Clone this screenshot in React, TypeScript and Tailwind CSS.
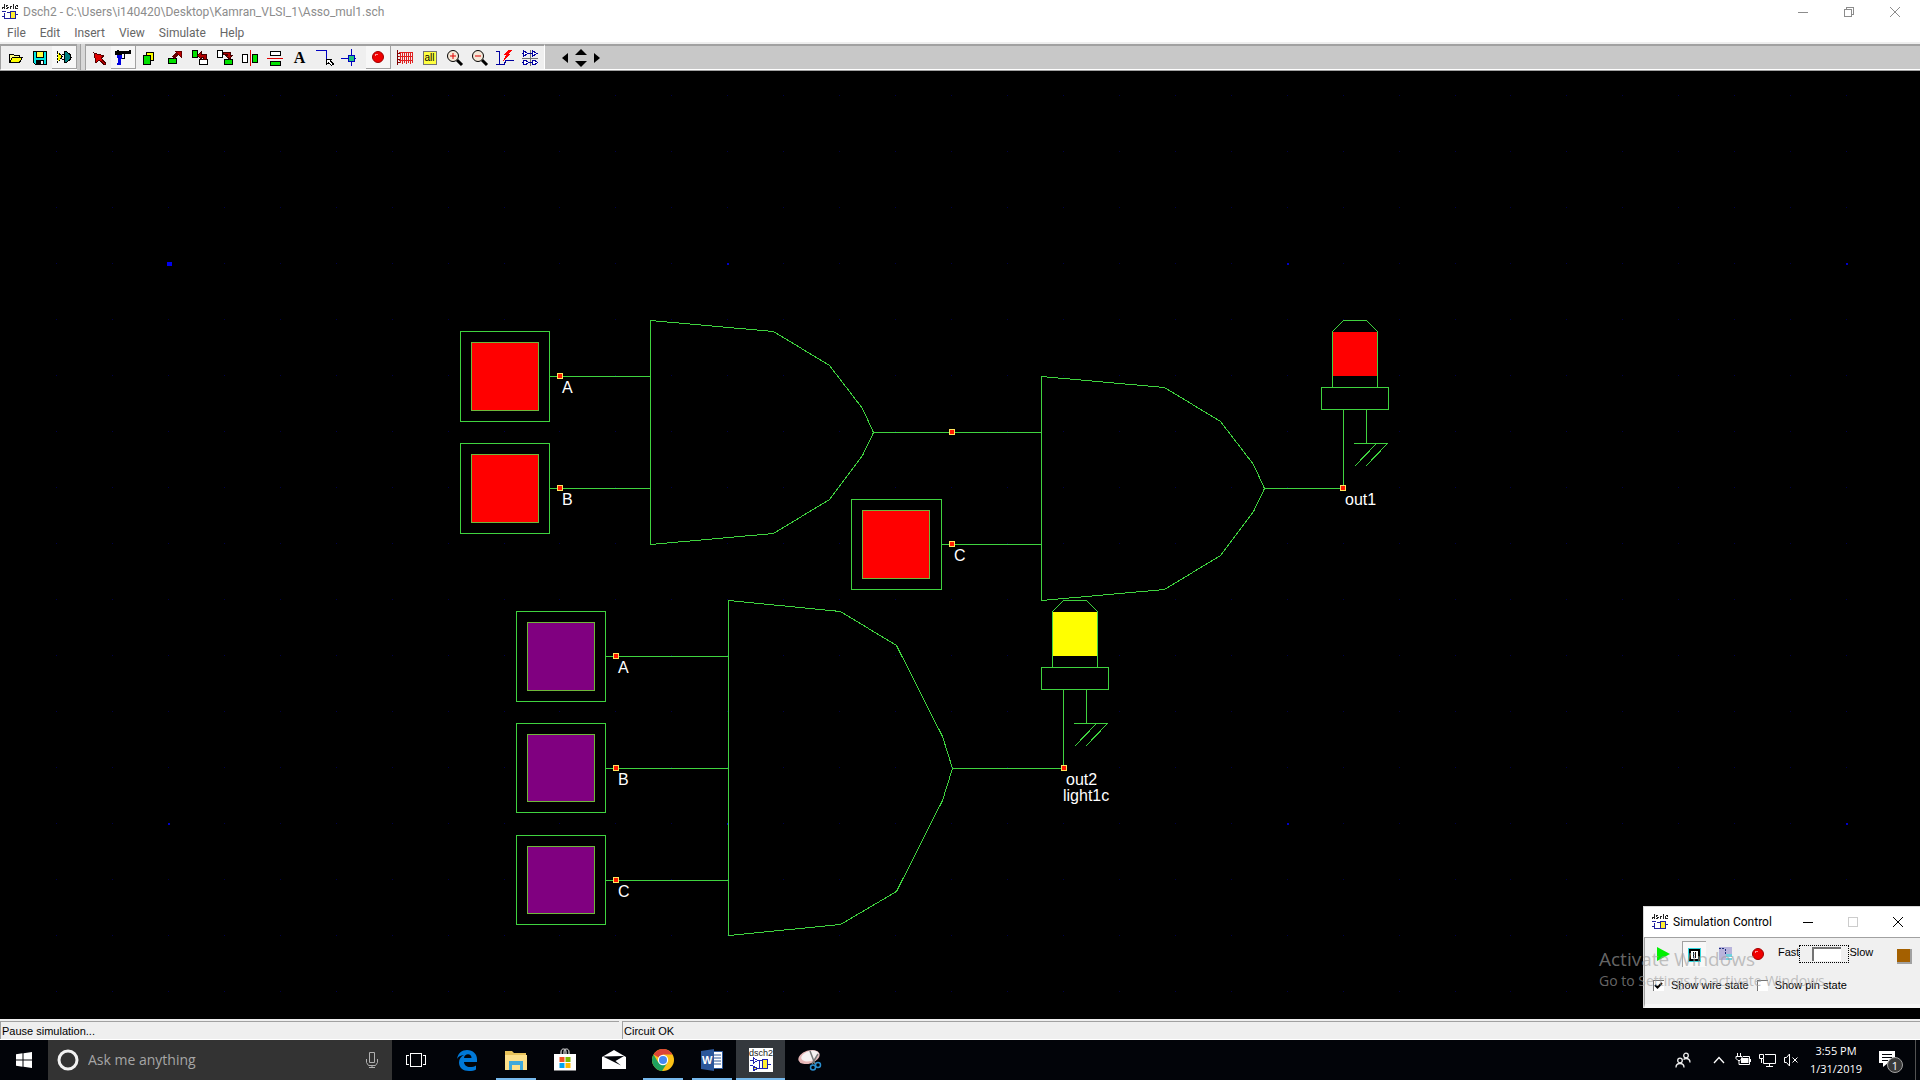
import React from "react";

const GREEN = "#3fd33f";

/* ---------- Schematic parts ---------- */

type Point = [number, number];
const pts = (list: Point[]) => list.map((p) => p.join(",")).join(" ");

function Pin({ x, y }: { x: number; y: number }) {
  return (
    <g>
      <rect x={x - 3} y={y - 3} width={6} height={6} fill="#ffe45c" />
      <rect x={x - 2} y={y - 2} width={4} height={4} fill="#ff1a00" />
    </g>
  );
}

function Label({ x, y, children }: { x: number; y: number; children: string }) {
  return (
    <text x={x} y={y} fill="#ffffff" fontSize={16}>
      {children}
    </text>
  );
}

type SwitchProps = { x: number; y: number; w?: number; h?: number; color: string; name: string };

function Switch({ x, y, w = 89, h = 90, color, name }: SwitchProps) {
  return (
    <g>
      <rect x={x + 0.5} y={y + 0.5} width={w} height={h} fill="none" stroke={GREEN} />
      <rect x={x + 11.5} y={y + 11.5} width={67} height={h - 22} fill={color} stroke="#6fb83a" />
      <path d={`M${x + w} ${y + 45.5}h10`} stroke={GREEN} />
      <Pin x={x + w + 11} y={y + 45} />
      <Label x={x + w + 13} y={y + 62}>
        {name}
      </Label>
    </g>
  );
}

function Lamp({ x, y, color }: { x: number; y: number; color: string }) {
  return (
    <g transform={`translate(${x} ${y})`} fill="none" stroke={GREEN}>
      <path d="M11.5 67.5V11.5L22.5 0.5H45.5L56.5 11.5V67.5" />
      <rect x={12} y={12} width={44} height={44} fill={color} stroke="none" />
      <rect x={0.5} y={67.5} width={67} height={22} fill="#000" />
      <path d="M22.5 90V168M45.5 90V123M33 123.5H67M55.5 123.5L33.5 146.5M66.5 123.5L44.5 146.5" />
    </g>
  );
}

const and2: Point[] = [
  [0, 0], [123, 11], [179, 45], [212, 88], [223, 112],
  [212, 135], [179, 179], [123, 213], [0, 224],
];
const and3: Point[] = [
  [0, 0], [112, 11], [168, 45], [214, 136], [224, 168],
  [214, 200], [168, 291], [112, 324], [0, 335],
];

function Gate({ x, y, shape }: { x: number; y: number; shape: Point[] }) {
  return (
    <polygon
      points={pts(shape)}
      transform={`translate(${x + 0.5} ${y + 0.5})`}
      fill="none"
      stroke={GREEN}
    />
  );
}

function Grid() {
  const dots: React.ReactNode[] = [];
  for (let r = 0; r < 17; r++) {
    for (let c = 0; c < 33; c++) {
      const x = Math.round(56 + c * 55.94);
      const y = Math.round(27 + r * 56);
      const major = (c - 2) % 10 === 0 && (r === 3 || r === 13);
      if (major && r === 3 && c === 2) {
        dots.push(<rect key={`${r}-${c}`} x={x - 1} y={y - 4} width={5} height={4} fill="#0000f0" />);
      } else {
        dots.push(
          <rect
            key={`${r}-${c}`}
            x={x}
            y={y - 3}
            width={major ? 2 : 1}
            height={major ? 2 : 1}
            fill={major ? "#0000c8" : "#00004a"}
          />,
        );
      }
    }
  }
  return <g>{dots}</g>;
}

function Schematic() {
  return (
    <svg
      className="block h-full w-full font-['Liberation_Sans',Arial,sans-serif]"
      shapeRendering="crispEdges"
      role="img"
      aria-label="Circuit schematic"
    >
      <Grid />
      <g transform="translate(0 -71)">
        <path
          d="M560 376.5H651M560 488.5H651M873 432.5H1042M952 544.5H1042M1265 488.5H1343M616 656.5H729M616 768.5H729M616 880.5H729M952 768.5H1064"
          stroke={GREEN}
        />
        <Gate x={650} y={320} shape={and2} />
        <Gate x={1041} y={376} shape={and2} />
        <Gate x={728} y={600} shape={and3} />
        <Switch x={460} y={331} color="#ff0000" name="A" />
        <Switch x={460} y={443} color="#ff0000" name="B" />
        <Switch x={851} y={499} w={90} color="#ff0000" name="C" />
        <Switch x={516} y={611} color="#800080" name="A" />
        <Switch x={516} y={723} h={89} color="#800080" name="B" />
        <Switch x={516} y={835} h={89} color="#800080" name="C" />
        <Lamp x={1321} y={320} color="#ff0000" />
        <Lamp x={1041} y={600} color="#ffff00" />
        <Pin x={952} y={432} />
        <Pin x={1343} y={488} />
        <Pin x={1064} y={768} />
        <Label x={1345} y={505}>out1</Label>
        <Label x={1066} y={785}>out2</Label>
        <Label x={1063} y={801}>light1c</Label>
      </g>
    </svg>
  );
}

/* ---------- Toolbar glyphs, drawn on a 24 x 24 grid ---------- */

const glyphs: Record<string, React.ReactNode> = {
  open: (
    <>
      <path d="M6.5 16.5V8.5H10.5L11.5 9.5H16.5V12" fill="#ffff80" stroke="#000" />
      <path d="M6.5 16.5L9.5 11.5H19.5L16.5 16.5Z" fill="#ffff00" stroke="#000" />
    </>
  ),
  save: (
    <>
      <path d="M5.5 5.5H18.5V18.5H7.5L5.5 16.5Z" fill="#00e5e5" stroke="#000" />
      <rect x={8.5} y={5.5} width={7} height={6} fill="#ffff40" stroke="#000" />
      <rect x={8} y={14} width={8} height={4} fill="#000" />
      <rect x={13} y={15} width={2} height={3} fill="#fff" />
    </>
  ),
  gate: (
    <>
      <path d="M5.5 7V17.5L10.5 12Z" fill="#ffff00" stroke="#000" strokeDasharray="2 1" />
      <path d="M12.5 6.5H14.5L18.5 10V14L14.5 17.5H12.5Z" fill="#008080" stroke="#000" />
      <path d="M10 9.5H12M10 14.5H12M18 12.5H20" stroke="#000" />
    </>
  ),
  select: (
    <>
      <path d="M12 12L18.5 18.5" stroke="#400000" strokeWidth={3} />
      <path d="M7 7L9 17L12 14L18 19L19 18L14 12L17 10Z" fill="#e00000" stroke="#500" />
    </>
  ),
  gun: (
    <>
      <path d="M4 6H6V5H8V6H18V5H20V9H11V10H4Z" fill="#000" />
      <path d="M6 10H11V14H10V20H6V18H7V13H6Z" fill="#0000e0" />
      <path d="M10.5 13.5H13.5V9" fill="none" stroke="#000" />
    </>
  ),
  copy: (
    <>
      <rect x={9.5} y={6.5} width={7} height={8} fill="#ffff00" stroke="#000" />
      <rect x={6.5} y={9.5} width={7} height={9} fill="#00e000" stroke="#000" />
    </>
  ),
  move: (
    <>
      <rect x={6.5} y={12.5} width={8} height={5} fill="#00e000" stroke="#000" />
      <path d="M11 12L17 6" stroke="#600" strokeWidth={3} />
      <path d="M13 5H19V11L17 9L15 7Z" fill="#c00000" stroke="#600" />
    </>
  ),
  left: (
    <>
      <rect x={4.5} y={4.5} width={5} height={7} fill="#00e000" stroke="#000" />
      <rect x={11.5} y={13.5} width={8} height={5} fill="#fff" stroke="#000" />
      <path d="M9.5 9.5L13.5 5.5V8H18.5V13H15.5V11H13.5V13.5Z" fill="#b00000" stroke="#400" />
    </>
  ),
  right: (
    <>
      <rect x={4.5} y={4.5} width={5} height={7} fill="#fff" stroke="#000" />
      <rect x={11.5} y={13.5} width={8} height={5} fill="#00e000" stroke="#000" />
      <path d="M10 6.5H17.5V9.5H19.5L16.5 13L12.5 9.5H14.5V8.5H10Z" fill="#b00000" stroke="#400" />
    </>
  ),
  flipH: (
    <>
      <rect x={4.5} y={8.5} width={5} height={8} fill="#fff" stroke="#000" />
      <rect x={14.5} y={8.5} width={5} height={8} fill="#00e000" stroke="#000" />
      <path d="M12.5 4V20" stroke="#e00000" />
    </>
  ),
  flipV: (
    <>
      <rect x={7.5} y={5.5} width={10} height={4} fill="#fff" stroke="#000" />
      <rect x={7.5} y={15.5} width={10} height={4} fill="#00e000" stroke="#000" />
      <path d="M4 12.5H20" stroke="#e00000" />
    </>
  ),
  line: (
    <>
      <path d="M2 4.5H12.5V14" fill="none" stroke="#0000c0" />
      <path d="M12.5 13.5H17.5L16.5 15L19.5 18L17.5 19.5L14.5 17L12.5 18.5Z" fill="#fff" stroke="#000" />
    </>
  ),
  connect: (
    <>
      <path d="M2 12.5H9M12.5 3V9M12.5 16V20M16 12.5H17" stroke="#0000c0" />
      <rect x={9.5} y={9.5} width={6} height={6} fill="#20c080" stroke="#0000c0" />
    </>
  ),
  record: (
    <>
      <circle cx={12} cy={12} r={5.5} fill="#f00000" stroke="#a00000" shapeRendering="auto" />
      <path d="M9 9.5H12M9.5 9V11" stroke="#ff9090" />
    </>
  ),
  chart: (
    <>
      <path d="M4.5 4V19M4 7.5H7M4 10.5H7M4 13.5H7M4 16.5H7" stroke="#800000" />
      <path d="M6 6.5H20M6 10.5H20M6 14.5H20M7.5 7V17M9.5 7V18M11.5 7V17M13.5 7V18M15.5 7V17M17.5 7V18M19.5 7V17" stroke="#e02020" />
    </>
  ),
  zoomIn: (
    <g shapeRendering="auto">
      <path d="M14 14L19 19" stroke="#000" strokeWidth={3} />
      <circle cx={10} cy={10} r={5.5} fill="#f5e8d8" stroke="#000" />
      <path d="M7 10H13M10 7V13" stroke="#e00000" />
    </g>
  ),
  zoomOut: (
    <g shapeRendering="auto">
      <path d="M14 14L19 19" stroke="#000" strokeWidth={3} />
      <circle cx={10} cy={10} r={5.5} fill="#f5e8d8" stroke="#000" />
      <path d="M7 10H13" stroke="#e00000" />
    </g>
  ),
  probe: (
    <>
      <path d="M3 5.5H6.5V18.5M3 18.5H11L13 14.5H21" fill="none" stroke="#0000a0" />
      <path d="M15 4H19L16 8H18L10 15L13 9H11Z" fill="#ff0000" />
    </>
  ),
  cells: (
    <>
      <path d="M4 12.5H20M12.5 4V20" stroke="#707070" />
      <path d="M5.5 4.5V10.5L9.5 7.5ZM14.5 4.5V10.5L18.5 7.5ZM5.5 14.5H8L10.5 16.5L8 18.5H5.5ZM14.5 14.5H17L19.5 16.5L17 18.5H14.5Z" fill="#fff" stroke="#0000a0" />
      <path d="M4 7.5H6M10 7.5H15M18 7.5H20M4 16.5H6M10 16.5H15" stroke="#0000a0" />
    </>
  ),
  play: <path d="M6 5V19L19 12Z" fill="#00f000" shapeRendering="auto" />,
  pause: (
    <>
      <rect x={5} y={5} width={14} height={14} fill="#30d8e0" />
      <rect x={6} y={6} width={12} height={12} fill="#000" />
      <rect x={8} y={8} width={8} height={8} fill="#fff" />
      <path d="M10.5 9V15M13.5 9V15" stroke="#000" />
    </>
  ),
  step: (
    <>
      <rect x={5} y={5} width={13} height={13} fill="#b8b4dc" />
      <path d="M5 6.5H10M11.5 7V11L15 14" stroke="#203080" strokeDasharray="2 1" fill="none" />
      <rect x={12} y={12} width={6} height={6} fill="#70d0e0" />
      <path d="M12 15.5H18" stroke="#fff" />
    </>
  ),
};

function Glyph({ name }: { name: string }) {
  if (name === "text") {
    return (
      <span className="font-['Liberation_Serif',serif] text-base leading-6 font-bold text-black">A</span>
    );
  }
  if (name === "all") {
    return (
      <span className="flex h-3.5 w-3.5 items-center justify-center border border-neutral-500 bg-[#ffff40] font-['Liberation_Sans',sans-serif] text-[10px] leading-3 text-black">
        all
      </span>
    );
  }
  return (
    <svg width={24} height={24} viewBox="0 0 24 24" shapeRendering="crispEdges" fill="none" aria-hidden="true">
      {glyphs[name]}
    </svg>
  );
}

function ToolButton({ name, label, raised }: { name: string; label: string; raised?: boolean }) {
  return (
    <button
      type="button"
      aria-label={label}
      className={
        raised
          ? "flex h-full w-[25px] items-center justify-center border-r border-b border-r-neutral-400 border-b-neutral-400 bg-[#f7f7f7]"
          : "flex h-full w-[25px] items-center justify-center"
      }
    >
      <Glyph name={name} />
    </button>
  );
}

function AppIcon({ size }: { size: number }) {
  return (
    <svg width={size} height={size} viewBox="0 0 16 16" shapeRendering="crispEdges" fill="none" aria-hidden="true">
      <rect width={16} height={16} fill="#fff" />
      <path d="M0 3.5H3M2.5 0V5M0.5 3V5M4 1.5H6M4.5 2V3M5 3.5H7M4 4.5H6M8 2.5H10M8.5 2V5M11.5 0V5M13.5 2V5M14 1.5H16M15.5 2V3M14 4.5H16" stroke="#222" />
      <path d="M0 7.5H4M2.5 9V15M0 12.5H2M3 14.5H5M5 8.5H8M5 14.5H8M14 10.5H16" stroke="#2020a0" />
      <rect x={8.5} y={7.5} width={5} height={7} fill="#ffee30" stroke="#2020a0" />
    </svg>
  );
}

/* ---------- Title bar, menu and toolbar ---------- */

function TitleBar() {
  return (
    <header className="flex h-[23px] items-center bg-white text-[#8c8c8c]">
      <span className="ml-0.5 flex w-[21px]">
        <AppIcon size={16} />
      </span>
      <h1 className="flex-1 font-['Roboto',sans-serif] text-xs font-normal">
        Dsch2 - C:\Users\i140420\Desktop\Kamran_VLSI_1\Asso_mul1.sch
      </h1>
      <button type="button" aria-label="Minimize" className="flex h-full w-[46px] items-center justify-center">
        <svg width={10} height={10} stroke="currentColor" shapeRendering="crispEdges"><path d="M0 5.5H10" /></svg>
      </button>
      <button type="button" aria-label="Restore" className="flex h-full w-[46px] items-center justify-center">
        <svg width={10} height={10} stroke="currentColor" fill="none" shapeRendering="crispEdges">
          <path d="M0.5 2.5H7.5V9.5H0.5ZM2.5 2V0.5H9.5V7.5H8" />
        </svg>
      </button>
      <button type="button" aria-label="Close" className="mr-0.5 flex h-full w-[46px] items-center justify-center">
        <svg width={10} height={10} stroke="currentColor"><path d="M0 0L10 10M10 0L0 10" /></svg>
      </button>
    </header>
  );
}

function MenuBar() {
  return (
    <nav className="flex h-[19px] items-center gap-3.5 bg-white pl-[7px] font-['Roboto',sans-serif] text-xs text-[#666]">
      {["File", "Edit", "Insert", "View", "Simulate", "Help"].map((m) => (
        <button key={m} type="button">{m}</button>
      ))}
    </nav>
  );
}

const editGroups: [string, string, boolean?][][] = [
  [["select", "Select"], ["gun", "Delete", true], ["copy", "Copy"], ["move", "Move"]],
  [["left", "Rotate left"], ["right", "Rotate right"], ["flipH", "Flip horizontal"], ["flipV", "Flip vertical"], ["text", "Add text"]],
  [["line", "Add line"], ["connect", "Add connection"]],
];
const viewTools: [string, string][] = [
  ["chart", "Timing diagram"],
  ["all", "View all"],
  ["zoomIn", "Zoom in"],
  ["zoomOut", "Zoom out"],
  ["probe", "View electrical net"],
  ["cells", "Symbol library"],
];

function ToolBar() {
  return (
    <div className="flex h-[29px] border-t-2 border-b border-t-[#eee] border-b-neutral-400 bg-[#c8c8c8]">
      <div className="flex border-t-2 border-b border-l border-t-neutral-400 border-b-white border-l-neutral-400 bg-[#efefef] pl-px">
        <ToolButton name="open" label="Open" />
        <ToolButton name="save" label="Save" />
        <ToolButton name="gate" label="Insert symbol" raised />
      </div>
      <div className="ml-[3px] flex w-1.5 border-x border-x-neutral-400 bg-[#d8d8d8]" />
      <div className="flex gap-px border-t-2 border-r border-b border-t-neutral-400 border-r-white border-b-white bg-[#efefef] pr-0.5">
        {editGroups.map((g) => (
          <div key={g[0][0]} className="flex">
            {g.map(([name, label, raised]) => (
              <ToolButton key={name} name={name} label={label} raised={raised} />
            ))}
          </div>
        ))}
        <div className="flex pl-0.5">
          <ToolButton name="record" label="Start simulation" raised />
        </div>
        <div className="flex">
          {viewTools.map(([name, label]) => (
            <ToolButton key={name} name={name} label={label} />
          ))}
        </div>
      </div>
      <div className="flex flex-1 items-center border-t-2 border-b border-t-neutral-400 border-b-white pl-3.5">
        <button type="button" aria-label="Scroll left" className="flex w-3 justify-center">
          <svg width={6} height={10}><path d="M6 0V10L0 5Z" /></svg>
        </button>
        <div className="mx-0.5 flex w-4 flex-col items-center gap-1.5">
          <button type="button" aria-label="Scroll up"><svg className="block" width={12} height={6}><path d="M0 6H12L6 0Z" /></svg></button>
          <button type="button" aria-label="Scroll down"><svg className="block" width={12} height={6}><path d="M0 0H12L6 6Z" /></svg></button>
        </div>
        <button type="button" aria-label="Scroll right" className="flex w-3 justify-center">
          <svg width={6} height={10}><path d="M0 0V10L6 5Z" /></svg>
        </button>
      </div>
    </div>
  );
}

/* ---------- Floating simulation window ---------- */

function CheckOption({ label, checked }: { label: string; checked?: boolean }) {
  return (
    <label className="flex items-center gap-[7px]">
      <span className="relative flex">
        <input
          type="checkbox"
          defaultChecked={checked}
          className="peer h-[11px] w-[11px] appearance-none border-t border-l border-t-neutral-500 border-l-neutral-500 bg-white"
        />
        <svg className="pointer-events-none absolute inset-0 hidden peer-checked:block" width={11} height={11} fill="none" stroke="#000" strokeWidth={2}>
          <path d="M2 5L4.5 7.5L9 3" />
        </svg>
      </span>
      {label}
    </label>
  );
}

function SimulationControl() {
  return (
    <section
      aria-label="Simulation Control"
      className="absolute right-0 bottom-[11px] w-[277px] border-t border-l border-[#d8d8d8] bg-[#f0f0f0]"
    >
      <div className="flex h-[30px] items-center bg-white pl-2 text-black">
        <AppIcon size={16} />
        <h2 className="ml-[5px] flex-1 font-['Roboto',sans-serif] text-xs">Simulation Control</h2>
        <button type="button" aria-label="Minimize window" className="flex w-11 justify-center">
          <svg width={10} height={10} stroke="#000" shapeRendering="crispEdges"><path d="M0 5.5H10" /></svg>
        </button>
        <button type="button" aria-label="Maximize window" className="flex w-[46px] justify-center">
          <svg width={10} height={10} stroke="#ccc" fill="none" shapeRendering="crispEdges"><path d="M0.5 0.5H9.5V9.5H0.5Z" /></svg>
        </button>
        <button type="button" aria-label="Close window" className="flex w-11 justify-center">
          <svg width={10} height={10} stroke="#000"><path d="M0 0L10 10M10 0L0 10" /></svg>
        </button>
      </div>
      <div className="border-t border-b-4 border-l border-t-neutral-400 border-b-[#f7f7f7] border-l-neutral-400 font-['Liberation_Sans',Arial,sans-serif] text-[11px] leading-4 text-black">
        <div className="flex h-8 items-center pr-2 pl-1.5">
          <button type="button" aria-label="Run" className="flex w-[31px]"><Glyph name="play" /></button>
          <button type="button" aria-label="Pause" className="flex h-[26px] w-6 items-center justify-center border-t border-l border-neutral-400 bg-[#f8f8f8]">
            <Glyph name="pause" />
          </button>
          <button type="button" aria-label="Step" className="ml-2 flex"><Glyph name="step" /></button>
          <button type="button" aria-label="Stop" className="ml-2 flex"><Glyph name="record" /></button>
          <label htmlFor="speed" className="ml-2 pb-1">Fast</label>
          <input
            id="speed"
            type="range"
            defaultValue={60}
            className="h-[18px] w-[50px] appearance-none border border-dotted border-black bg-transparent [&::-webkit-slider-thumb]:h-3.5 [&::-webkit-slider-thumb]:w-[29px] [&::-webkit-slider-thumb]:appearance-none [&::-webkit-slider-thumb]:border-t-2 [&::-webkit-slider-thumb]:border-l-2 [&::-webkit-slider-thumb]:border-neutral-500 [&::-webkit-slider-thumb]:bg-white"
          />
          <span className="flex-1 pb-1">Slow</span>
          <button type="button" aria-label="Colour" className="mt-1 h-[15px] w-[15px] border-r-2 border-b-2 border-neutral-400 bg-[#a46000]" />
        </div>
        <div className="flex h-[34px] items-center gap-2 pb-1 pl-2">
          <CheckOption label="Show wire state" checked />
          <CheckOption label="Show pin state" />
        </div>
      </div>
    </section>
  );
}

function Watermark() {
  return (
    <div className="pointer-events-none absolute right-[89px] bottom-[28px] w-[232px] whitespace-nowrap text-neutral-400/65">
      <p className="text-[19px] leading-6">Activate Windows</p>
      <p className="text-sm leading-5">Go to Settings to activate Windows.</p>
    </div>
  );
}

/* ---------- Status bar and taskbar ---------- */

function StatusBar() {
  return (
    <div className="flex h-[21px] gap-[3px] border-t-2 border-b border-t-[#eee] border-b-white bg-[#efefef] font-['Liberation_Sans',Arial,sans-serif] text-[11px] leading-[18px] text-black">
      <div className="w-[619px] border-t border-l border-neutral-400 pl-px">Pause simulation...</div>
      <div className="flex-1 border-t border-l border-neutral-400 pl-px">Circuit OK</div>
    </div>
  );
}

const taskIcons: { name: string; state?: "open" | "active"; art: React.ReactNode }[] = [
  {
    name: "Edge",
    art: (
      <path d="M2 11C3 5 7 2 12 2c6 0 10 4 10 9v3H9c0 3 3 5 6 5 2.5 0 4.500-.6 6-1.600v4C19.500 22.500 17 23 14 23 8 23 4 19.500 4 14.500 4 11 6 8.500 9 7 5.500 7.300 3 9 2 11Zm7-1h7.500C16.500 7.500 15 6.300 13 6.300S9.300 7.600 9 10Z" fill="#0078d7" />
    ),
  },
  {
    name: "File Explorer",
    state: "open",
    art: (
      <>
        <path d="M1 3h7l2 2h12v17H1Z" fill="#e8c35a" />
        <path d="M1 7h22v15H1Z" fill="#fde08a" />
        <path d="M5 13h14v9h-3v-5H8v5H5Z" fill="#3fa9dc" />
      </>
    ),
  },
  {
    name: "Store",
    art: (
      <>
        <path d="M8 7V4c0-2 1-3 2.500-3S13 2 13 4v3M11 7V4c0-2 1-3 2.500-3S16 2 16 4v3" fill="none" stroke="#fff" />
        <path d="M1 6h22v16.500H1Z" fill="#fff" />
        <path d="M6.500 9h5v5h-5Z" fill="#f25022" />
        <path d="M12.500 9h5v5h-5Z" fill="#7fba00" />
        <path d="M6.500 15h5v5h-5Z" fill="#00a4ef" />
        <path d="M12.500 15h5v5h-5Z" fill="#ffb900" />
      </>
    ),
  },
  {
    name: "Mail",
    art: (
      <>
        <path d="M0 9L12 2l12 7v12H0Z" fill="#fff" />
        <path d="M1 8.500L22 8l-8.500 5 5.500 4.500Z" fill="#020409" />
      </>
    ),
  },
  {
    name: "Chrome",
    state: "open",
    art: (
      <>
        <circle cx={12} cy={12} r={11} fill="#fbc116" />
        <path d="M12 12L2.500 6.500A11 11 0 0 1 21.500 6.500H12Z" fill="#db4437" />
        <path d="M2.500 6.500A11 11 0 0 0 11 23L16.500 14.500 12 12 7.300 14.500Z" fill="#1fa15d" />
        <circle cx={12} cy={12} r={5.2} fill="#fff" />
        <circle cx={12} cy={12} r={4} fill="#4688f1" />
      </>
    ),
  },
  {
    name: "Word",
    state: "open",
    art: (
      <>
        <path d="M12 3.500h10.500v17H12Z" fill="#fff" stroke="#2b579a" />
        <path d="M14 7h7M14 10h7M14 13h7M14 16h7" stroke="#2b579a" />
        <path d="M1 3L14 1v22L1 21Z" fill="#2b579a" />
        <text x={2} y={16} fill="#fff" fontSize={11} fontWeight={700}>W</text>
      </>
    ),
  },
  {
    name: "Dsch2",
    state: "active",
    art: (
      <g shapeRendering="crispEdges">
        <rect width={24} height={24} fill="#fff" />
        <text x={0} y={8} fill="#222" fontSize={9}>dsch2</text>
        <path d="M1 12.5H5M9 12.5H13M1 17.5H4M4 20.5H13M18 16.5H22M4.5 10V15L8.5 12.5ZM10.5 13V21" fill="none" stroke="#2020b0" />
        <rect x={13.5} y={11.5} width={5} height={9} fill="#ffee30" stroke="#2020b0" />
        <path d="M4.5 18.5L8.5 20.5L4.5 22.5Z" fill="#ffee30" stroke="#2020b0" />
      </g>
    ),
  },
  {
    name: "Snipping Tool",
    art: (
      <>
        <ellipse cx={11} cy={9} rx={11} ry={6.5} transform="rotate(-18 11 9)" fill="#e7b7b7" />
        <ellipse cx={12} cy={8} rx={9} ry={5} transform="rotate(-18 12 8)" fill="#f6f2f2" />
        <path d="M12 3L17 16M20 6L14 16" stroke="#777" strokeWidth={1.5} />
        <circle cx={15} cy={19.5} r={2.5} fill="none" stroke="#2b8fd0" strokeWidth={1.5} />
        <circle cx={20} cy={17} r={2.5} fill="none" stroke="#2b8fd0" strokeWidth={1.5} />
      </>
    ),
  },
];

function TaskButton({ name, state, art }: (typeof taskIcons)[number]) {
  return (
    <button
      type="button"
      aria-label={name}
      className={
        state === "active"
          ? "flex h-10 w-[49px] flex-col items-center justify-end bg-[#34383d]"
          : "flex h-10 w-[49px] flex-col items-center justify-end"
      }
    >
      <svg className="mb-1.5 font-['Liberation_Sans',sans-serif]" width={24} height={24} viewBox="0 0 24 24" aria-hidden="true">
        {art}
      </svg>
      <span
        className={
          state === "active" ? "h-0.5 w-full bg-[#76b9ed]" : state === "open" ? "h-0.5 w-10 bg-[#76b9ed]" : "h-0.5 w-10"
        }
      />
    </button>
  );
}

function TaskBar() {
  return (
    <footer className="flex h-10 items-center bg-[#020409] text-white">
      <button type="button" aria-label="Start" className="flex h-10 w-12 items-center justify-center">
        <svg width={16} height={16} fill="#fff"><path d="M0 2.2L6.5 1.3V7.5H0ZM7.5 1.2L16 0V7.5H7.5ZM0 8.5H6.5V14.7L0 13.8ZM7.5 8.5H16V16L7.5 14.8Z" /></svg>
      </button>
      <div className="flex h-10 w-[344px] items-center bg-[#333] pr-3 pl-[9px]">
        <svg width={22} height={22} fill="none" aria-hidden="true"><circle cx={11} cy={11} r={9} stroke="#f2f2f2" strokeWidth={3} /></svg>
        <input
          type="text"
          aria-label="Search"
          placeholder="Ask me anything"
          className="ml-[9px] min-w-0 flex-1 bg-transparent text-sm outline-none placeholder:text-[#a6a6a6]"
        />
        <button type="button" aria-label="Speak">
          <svg className="block" width={16} height={18} fill="none" stroke="#b0b0b0">
            <path d="M5.5 1.5H10.5V11.5H5.5ZM2.5 8V11.5L4.5 14.5H11.5L13.5 11.5V8M8 14.5V17M5 16.5H11" />
          </svg>
        </button>
      </div>
      <button type="button" aria-label="Task view" className="mr-0.5 flex h-10 w-12 items-center justify-center">
        <svg width={20} height={14} fill="none" stroke="#fff" shapeRendering="crispEdges">
          <path d="M4.5 0.5H15.5V13.5H4.5ZM3 2.5H0.5V11.5H3M17 2.5H19.5V11.5H17" />
        </svg>
      </button>
      {taskIcons.map((t) => (
        <TaskButton key={t.name} {...t} />
      ))}
      <div className="ml-auto flex h-full items-center">
        <button type="button" aria-label="People" className="mr-[22px]">
          <svg className="block" width={16} height={16} fill="none" stroke="#eee" strokeWidth={1.3}>
            <circle cx={5} cy={8.5} r={2.3} /><path d="M1 15.5C1 12.5 3 11.5 5 11.5S9 12.5 9 15.5" />
            <circle cx={11} cy={3.5} r={2.3} /><path d="M8.5 7.5C9.5 6.8 10 6.5 11 6.5 13.5 6.5 15 8 15 10.5" />
          </svg>
        </button>
        <button type="button" aria-label="Show hidden icons" className="mr-2.5">
          <svg className="block" width={12} height={8} fill="none" stroke="#fff" strokeWidth={1.3}><path d="M1 7L6 1.5L11 7" /></svg>
        </button>
        <button type="button" aria-label="Battery" className="mr-2">
          <svg className="block" width={16} height={14} fill="none" stroke="#fff">
            <path d="M2.5 0V3M5.5 0V3M1 3.5H7V5.5L5 7.5H3L1 5.5ZM4 7.5V11.5H14.5V3.5H8M15.5 6V9" />
            <rect x={6.5} y={5.5} width={6.5} height={4} fill="#fff" />
          </svg>
        </button>
        <button type="button" aria-label="Network" className="mr-2">
          <svg className="block" width={17} height={15} fill="none" stroke="#fff">
            <path d="M6 1.5H16.5V10.5H4.5V6M10.5 10.5V13.5M7 13.5H14M0.5 1.5H4.5V5.5H0.5ZM2.5 5.5V10" />
          </svg>
        </button>
        <button type="button" aria-label="Volume muted" className="mr-2.5">
          <svg className="block" width={15} height={14} fill="none" stroke="#fff">
            <path d="M0.5 4.5H2.5L5.5 1V13L2.5 9.5H0.5ZM8.5 4.5L13.5 9.5M13.5 4.5L8.5 9.5" />
          </svg>
        </button>
        <div className="w-[54px] pb-px text-center text-[11px] leading-[18px] whitespace-nowrap">
          <p>3:55 PM</p>
          <p>1/31/2019</p>
        </div>
        <button type="button" aria-label="1 notification" className="relative mt-1.5 ml-4 flex h-6 w-9">
          <svg width={18} height={18}><path d="M0 0H16V12H9L4 16V12H0Z" fill="#fff" /><path d="M3 3.5H13M3 6.5H13M3 9.5H9" stroke="#020409" /></svg>
          <span className="absolute top-1.5 left-2 flex h-4 w-4 items-center justify-center rounded-full border border-neutral-400 bg-[#3a3a3a] text-[11px] leading-none">1</span>
        </button>
        <div className="h-full w-[5px] border-l border-neutral-600" />
      </div>
    </footer>
  );
}

export default function App() {
  return (
    <div className="flex h-screen flex-col overflow-hidden bg-black font-['Open_Sans','Noto_Sans',sans-serif]">
      <TitleBar />
      <MenuBar />
      <ToolBar />
      <main className="relative min-h-0 flex-1 overflow-hidden bg-black">
        <Schematic />
        <SimulationControl />
        <Watermark />
      </main>
      <StatusBar />
      <TaskBar />
    </div>
  );
}
